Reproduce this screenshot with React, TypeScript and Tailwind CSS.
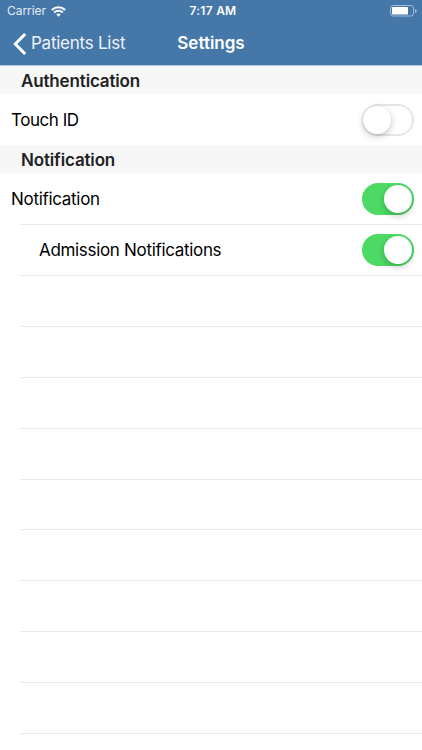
import React from "react";

function Toggle({ on }: { on: boolean }) {
  return on ? (
    <span className="flex h-[32px] w-[52px] shrink-0 items-center justify-end rounded-full bg-[#4cd964] pr-[2px]">
      <span className="size-[28px] rounded-full bg-white shadow-[0_3px_6px_rgba(0,0,0,0.22)]" />
    </span>
  ) : (
    <span className="flex h-[32px] w-[52px] shrink-0 items-center rounded-full border-2 border-[#e5e5e5] bg-white">
      <span className="-ml-px size-[28px] rounded-full bg-white shadow-[0_2px_6px_rgba(0,0,0,0.25)]" />
    </span>
  );
}

function SectionHeader({ title, className }: { title: string; className: string }) {
  return (
    <h2 className={`flex shrink-0 items-center bg-[#f7f7f7] pt-[3px] pl-[21px] text-[17px] font-semibold text-[#222] ${className}`}>
      {title}
    </h2>
  );
}

export default function App() {
  return (
    <div className="flex h-[750px] w-[422px] flex-col overflow-hidden bg-white font-['Inter',sans-serif] text-black">
      <header className="flex h-[66px] shrink-0 flex-col border-b border-[#b5c7da] bg-[#4577a9] text-white">
        <div className="grid h-[22px] grid-cols-3 items-center pr-[5px] pl-[7px]">
          <div className="flex items-center gap-[5px] text-[12px] text-[#e4ecf4]">
            <span className="tracking-[-0.05px]">Carrier</span>
            <svg width="15" height="11" viewBox="0 0 15 11" fill="none" stroke="white" strokeWidth="2.1">
              <path d="M.9 4a9.3 9.3 0 0 1 13.2 0M3.2 6.5a6 6 0 0 1 8.6 0" />
              <path d="M7.5 10.7 5.3 8.5a3.1 3.1 0 0 1 4.4 0Z" fill="white" stroke="none" />
            </svg>
          </div>
          <span className="pl-[2px] text-center text-[12px] font-semibold tracking-[0.25px]">7:17 AM</span>
          <svg className="justify-self-end" width="27" height="12" viewBox="0 0 27 12">
            <rect x="0.5" y="0.5" width="23" height="10.5" rx="2.5" fill="none" stroke="#a2bbd4" />
            <rect x="2" y="2" width="16" height="7.5" rx="0.8" fill="white" />
            <path d="M25 4q1.7.5 1.7 2T25 8Z" fill="#a2bbd4" />
          </svg>
        </div>
        <div className="grid h-[43px] grid-cols-[148px_126px_148px] items-center">
          <div className="flex items-center gap-[4px] pl-[13px] text-[17px] whitespace-nowrap text-[#eef3f8]">
            <svg className="shrink-0" width="14" height="22" viewBox="0 0 14 22" fill="none" stroke="white" strokeWidth="3">
              <path d="M12.2 1 2.3 11l9.9 10" />
            </svg>
            <span className="pt-px tracking-[-0.25px]">Patients List</span>
          </div>
          <h1 className="pt-px text-center text-[17px] font-semibold">Settings</h1>
        </div>
      </header>
      <SectionHeader title="Authentication" className="h-[28px] tracking-[-0.15px]" />
      <div className="flex h-[51px] shrink-0 items-center justify-between pr-[8px] pl-[11px] text-[17px]">
        <span className="pt-[2px] tracking-[-0.45px]">Touch ID</span>
        <Toggle on={false} />
      </div>
      <SectionHeader title="Notification" className="h-[28px] tracking-[-0.15px]" />
      <div className="flex h-[51px] shrink-0 items-center justify-between pr-[8px] pl-[11px] text-[17px]">
        <span className="pt-[2px] tracking-[-0.3px]">Notification</span>
        <Toggle on />
      </div>
      <div className="ml-[20px] flex h-[51px] shrink-0 items-center justify-between border-t border-[#e9e9eb] pr-[8px] pl-[19px] text-[17px]">
        <span className="pt-[2px] tracking-[-0.32px]">Admission Notifications</span>
        <Toggle on />
      </div>
      {Array.from({ length: 10 }, (_, i) => (
        <div key={i} className="ml-[20px] h-[50.9px] shrink-0 border-t border-[#e9e9eb]" />
      ))}
    </div>
  );
}
